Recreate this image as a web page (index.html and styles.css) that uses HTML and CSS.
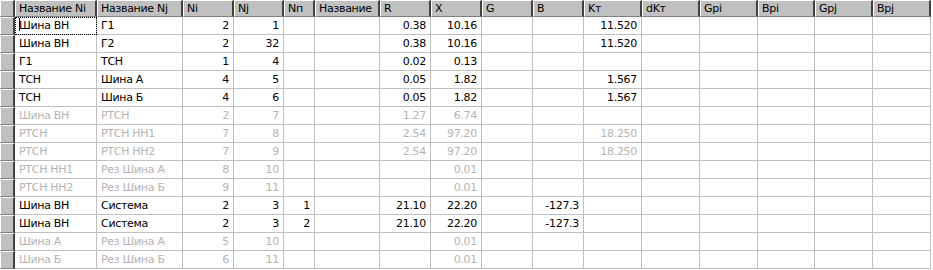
FILE: index.html
```html
<!DOCTYPE html>
<html>
<head>
<meta charset="utf-8">
<link rel="stylesheet" href="styles.css">
</head>
<body>
<div class="grid">
  <div class="row head">
    <div class="cell ind hind"></div>
    <div class="cell hc c1">Название Ni</div>
    <div class="cell hc c2">Название Nj</div>
    <div class="cell hc c3">Ni</div>
    <div class="cell hc c4">Nj</div>
    <div class="cell hc c5">Nп</div>
    <div class="cell hc c6">Название</div>
    <div class="cell hc c7">R</div>
    <div class="cell hc c8">X</div>
    <div class="cell hc c9">G</div>
    <div class="cell hc c10">B</div>
    <div class="cell hc c11">Kт</div>
    <div class="cell hc c12">dKт</div>
    <div class="cell hc c13">Gpi</div>
    <div class="cell hc c14">Bpi</div>
    <div class="cell hc c15">Gpj</div>
    <div class="cell hc c16">Bpj</div>
  </div>

  <div class="row">
    <div class="cell ind"></div>
    <div class="cell c1 focus"><span class="caret"></span>Шина ВН</div>
    <div class="cell c2">Г1</div>
    <div class="cell c3 num">2</div>
    <div class="cell c4 num">1</div>
    <div class="cell c5 num"></div>
    <div class="cell c6"></div>
    <div class="cell c7 num">0.38</div>
    <div class="cell c8 num">10.16</div>
    <div class="cell c9 num"></div>
    <div class="cell c10 num"></div>
    <div class="cell c11 num">11.520</div>
    <div class="cell c12"></div><div class="cell c13"></div><div class="cell c14"></div><div class="cell c15"></div><div class="cell c16"></div>
  </div>

  <div class="row">
    <div class="cell ind"></div>
    <div class="cell c1">Шина ВН</div>
    <div class="cell c2">Г2</div>
    <div class="cell c3 num">2</div>
    <div class="cell c4 num">32</div>
    <div class="cell c5 num"></div>
    <div class="cell c6"></div>
    <div class="cell c7 num">0.38</div>
    <div class="cell c8 num">10.16</div>
    <div class="cell c9 num"></div>
    <div class="cell c10 num"></div>
    <div class="cell c11 num">11.520</div>
    <div class="cell c12"></div><div class="cell c13"></div><div class="cell c14"></div><div class="cell c15"></div><div class="cell c16"></div>
  </div>

  <div class="row">
    <div class="cell ind"></div>
    <div class="cell c1">Г1</div>
    <div class="cell c2">ТСН</div>
    <div class="cell c3 num">1</div>
    <div class="cell c4 num">4</div>
    <div class="cell c5 num"></div>
    <div class="cell c6"></div>
    <div class="cell c7 num">0.02</div>
    <div class="cell c8 num">0.13</div>
    <div class="cell c9 num"></div>
    <div class="cell c10 num"></div>
    <div class="cell c11 num"></div>
    <div class="cell c12"></div><div class="cell c13"></div><div class="cell c14"></div><div class="cell c15"></div><div class="cell c16"></div>
  </div>

  <div class="row">
    <div class="cell ind"></div>
    <div class="cell c1">ТСН</div>
    <div class="cell c2">Шина А</div>
    <div class="cell c3 num">4</div>
    <div class="cell c4 num">5</div>
    <div class="cell c5 num"></div>
    <div class="cell c6"></div>
    <div class="cell c7 num">0.05</div>
    <div class="cell c8 num">1.82</div>
    <div class="cell c9 num"></div>
    <div class="cell c10 num"></div>
    <div class="cell c11 num">1.567</div>
    <div class="cell c12"></div><div class="cell c13"></div><div class="cell c14"></div><div class="cell c15"></div><div class="cell c16"></div>
  </div>

  <div class="row">
    <div class="cell ind"></div>
    <div class="cell c1">ТСН</div>
    <div class="cell c2">Шина Б</div>
    <div class="cell c3 num">4</div>
    <div class="cell c4 num">6</div>
    <div class="cell c5 num"></div>
    <div class="cell c6"></div>
    <div class="cell c7 num">0.05</div>
    <div class="cell c8 num">1.82</div>
    <div class="cell c9 num"></div>
    <div class="cell c10 num"></div>
    <div class="cell c11 num">1.567</div>
    <div class="cell c12"></div><div class="cell c13"></div><div class="cell c14"></div><div class="cell c15"></div><div class="cell c16"></div>
  </div>

  <div class="row dim">
    <div class="cell ind"></div>
    <div class="cell c1">Шина ВН</div>
    <div class="cell c2">РТСН</div>
    <div class="cell c3 num">2</div>
    <div class="cell c4 num">7</div>
    <div class="cell c5 num"></div>
    <div class="cell c6"></div>
    <div class="cell c7 num">1.27</div>
    <div class="cell c8 num">6.74</div>
    <div class="cell c9 num"></div>
    <div class="cell c10 num"></div>
    <div class="cell c11 num"></div>
    <div class="cell c12"></div><div class="cell c13"></div><div class="cell c14"></div><div class="cell c15"></div><div class="cell c16"></div>
  </div>

  <div class="row dim">
    <div class="cell ind"></div>
    <div class="cell c1">РТСН</div>
    <div class="cell c2">РТСН НН1</div>
    <div class="cell c3 num">7</div>
    <div class="cell c4 num">8</div>
    <div class="cell c5 num"></div>
    <div class="cell c6"></div>
    <div class="cell c7 num">2.54</div>
    <div class="cell c8 num">97.20</div>
    <div class="cell c9 num"></div>
    <div class="cell c10 num"></div>
    <div class="cell c11 num">18.250</div>
    <div class="cell c12"></div><div class="cell c13"></div><div class="cell c14"></div><div class="cell c15"></div><div class="cell c16"></div>
  </div>

  <div class="row dim">
    <div class="cell ind"></div>
    <div class="cell c1">РТСН</div>
    <div class="cell c2">РТСН НН2</div>
    <div class="cell c3 num">7</div>
    <div class="cell c4 num">9</div>
    <div class="cell c5 num"></div>
    <div class="cell c6"></div>
    <div class="cell c7 num">2.54</div>
    <div class="cell c8 num">97.20</div>
    <div class="cell c9 num"></div>
    <div class="cell c10 num"></div>
    <div class="cell c11 num">18.250</div>
    <div class="cell c12"></div><div class="cell c13"></div><div class="cell c14"></div><div class="cell c15"></div><div class="cell c16"></div>
  </div>

  <div class="row dim">
    <div class="cell ind"></div>
    <div class="cell c1">РТСН НН1</div>
    <div class="cell c2">Рез Шина А</div>
    <div class="cell c3 num">8</div>
    <div class="cell c4 num">10</div>
    <div class="cell c5 num"></div>
    <div class="cell c6"></div>
    <div class="cell c7 num"></div>
    <div class="cell c8 num">0.01</div>
    <div class="cell c9 num"></div>
    <div class="cell c10 num"></div>
    <div class="cell c11 num"></div>
    <div class="cell c12"></div><div class="cell c13"></div><div class="cell c14"></div><div class="cell c15"></div><div class="cell c16"></div>
  </div>

  <div class="row dim">
    <div class="cell ind"></div>
    <div class="cell c1">РТСН НН2</div>
    <div class="cell c2">Рез Шина Б</div>
    <div class="cell c3 num">9</div>
    <div class="cell c4 num">11</div>
    <div class="cell c5 num"></div>
    <div class="cell c6"></div>
    <div class="cell c7 num"></div>
    <div class="cell c8 num">0.01</div>
    <div class="cell c9 num"></div>
    <div class="cell c10 num"></div>
    <div class="cell c11 num"></div>
    <div class="cell c12"></div><div class="cell c13"></div><div class="cell c14"></div><div class="cell c15"></div><div class="cell c16"></div>
  </div>

  <div class="row">
    <div class="cell ind"></div>
    <div class="cell c1">Шина ВН</div>
    <div class="cell c2">Система</div>
    <div class="cell c3 num">2</div>
    <div class="cell c4 num">3</div>
    <div class="cell c5 num">1</div>
    <div class="cell c6"></div>
    <div class="cell c7 num">21.10</div>
    <div class="cell c8 num">22.20</div>
    <div class="cell c9 num"></div>
    <div class="cell c10 num">-127.3</div>
    <div class="cell c11 num"></div>
    <div class="cell c12"></div><div class="cell c13"></div><div class="cell c14"></div><div class="cell c15"></div><div class="cell c16"></div>
  </div>

  <div class="row">
    <div class="cell ind"></div>
    <div class="cell c1">Шина ВН</div>
    <div class="cell c2">Система</div>
    <div class="cell c3 num">2</div>
    <div class="cell c4 num">3</div>
    <div class="cell c5 num">2</div>
    <div class="cell c6"></div>
    <div class="cell c7 num">21.10</div>
    <div class="cell c8 num">22.20</div>
    <div class="cell c9 num"></div>
    <div class="cell c10 num">-127.3</div>
    <div class="cell c11 num"></div>
    <div class="cell c12"></div><div class="cell c13"></div><div class="cell c14"></div><div class="cell c15"></div><div class="cell c16"></div>
  </div>

  <div class="row dim">
    <div class="cell ind"></div>
    <div class="cell c1">Шина А</div>
    <div class="cell c2">Рез Шина А</div>
    <div class="cell c3 num">5</div>
    <div class="cell c4 num">10</div>
    <div class="cell c5 num"></div>
    <div class="cell c6"></div>
    <div class="cell c7 num"></div>
    <div class="cell c8 num">0.01</div>
    <div class="cell c9 num"></div>
    <div class="cell c10 num"></div>
    <div class="cell c11 num"></div>
    <div class="cell c12"></div><div class="cell c13"></div><div class="cell c14"></div><div class="cell c15"></div><div class="cell c16"></div>
  </div>

  <div class="row dim">
    <div class="cell ind"></div>
    <div class="cell c1">Шина Б</div>
    <div class="cell c2">Рез Шина Б</div>
    <div class="cell c3 num">6</div>
    <div class="cell c4 num">11</div>
    <div class="cell c5 num"></div>
    <div class="cell c6"></div>
    <div class="cell c7 num"></div>
    <div class="cell c8 num">0.01</div>
    <div class="cell c9 num"></div>
    <div class="cell c10 num"></div>
    <div class="cell c11 num"></div>
    <div class="cell c12"></div><div class="cell c13"></div><div class="cell c14"></div><div class="cell c15"></div><div class="cell c16"></div>
  </div>
</div>
</body>
</html>
```

FILE: styles.css
```css
html, body {
  margin: 0;
  padding: 0;
  background: #ffffff;
}

.grid {
  font-family: "DejaVu Sans", Verdana, sans-serif;
  font-size: 11px;
  letter-spacing: -0.3px;
  color: #000000;
  display: flex;
  flex-direction: column;
  width: 933px;
}

.row {
  display: flex;
  height: 18px;
}

.row.head {
  height: 17px;
}

.cell {
  box-sizing: border-box;
  flex: none;
  height: 100%;
  border-right: 1px solid #c0c0c0;
  border-bottom: 1px solid #c0c0c0;
  padding: 0 3px 0 4px;
  line-height: 17px;
  white-space: nowrap;
  overflow: hidden;
}

.num {
  text-align: right;
  padding: 0 4px 0 2px;
}

.dim .cell {
  color: #b4b4b4;
}

/* column widths (including 1px grid line on the right) */
.ind { width: 15px; }
.c1 { width: 82px; }
.c2 { width: 86px; }
.c3 { width: 51px; }
.c4 { width: 50px; }
.c5 { width: 31px; }
.c6 { width: 65px; }
.c7 { width: 51px; }
.c8 { width: 51px; }
.c9 { width: 51px; }
.c10 { width: 51px; }
.c11 { width: 58px; }
.c12 { width: 58px; }
.c13 { width: 58px; }
.c14 { width: 57px; }
.c15 { width: 58px; }
.c16 { width: 58px; }

/* indicator (row selector) column */
.ind {
  padding: 0;
  background: #c0c0c0;
  border-top: 1px solid #ffffff;
  border-left: 1px solid #ffffff;
  border-right: 2px solid #404040;
  border-bottom: 1px solid #808080;
}

/* header */
.hc {
  background: #c0c0c0;
  color: #000000;
  border-top: 1px solid #ffffff;
  border-left: 1px solid #ffffff;
  border-right: 2px solid #404040;
  border-bottom: 1px solid #808080;
  padding: 0 3px 0 3px;
  line-height: 15px;
}

.hind {
  border-right: 2px solid #404040;
}

/* focused cell */
.focus {
  outline: 1px dotted #000000;
  outline-offset: -1px;
}

.caret {
  display: inline-block;
  width: 1px;
  height: 13px;
  background: #000000;
  vertical-align: -2px;
  margin-right: -1px;
}
```
